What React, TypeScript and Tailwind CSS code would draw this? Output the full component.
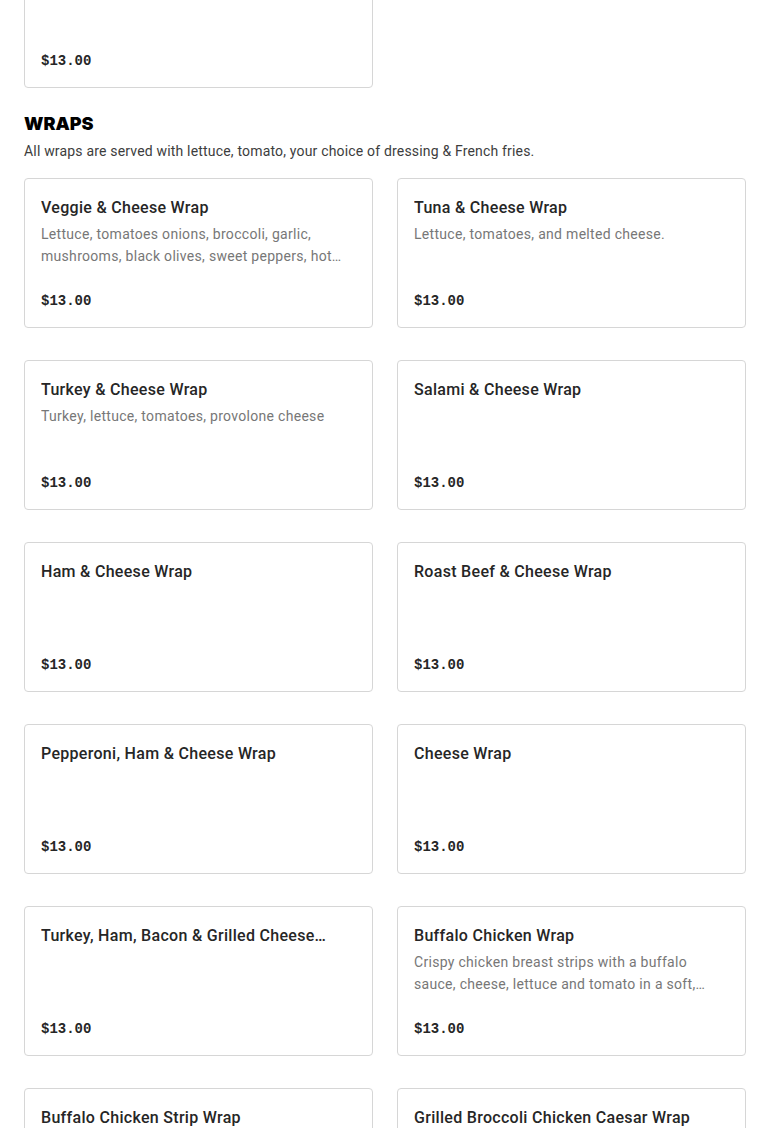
type Item = { name: string; desc?: string; price: string };

const wraps: Item[] = [
  {
    name: "Veggie & Cheese Wrap",
    desc: "Lettuce, tomatoes onions, broccoli, garlic, mushrooms, black olives, sweet peppers, hot peppers and melted cheese.",
    price: "$13.00",
  },
  { name: "Tuna & Cheese Wrap", desc: "Lettuce, tomatoes, and melted cheese.", price: "$13.00" },
  { name: "Turkey & Cheese Wrap", desc: "Turkey, lettuce, tomatoes, provolone cheese", price: "$13.00" },
  { name: "Salami & Cheese Wrap", price: "$13.00" },
  { name: "Ham & Cheese Wrap", price: "$13.00" },
  { name: "Roast Beef & Cheese Wrap", price: "$13.00" },
  { name: "Pepperoni, Ham & Cheese Wrap", price: "$13.00" },
  { name: "Cheese Wrap", price: "$13.00" },
  { name: "Turkey, Ham, Bacon & Grilled Cheese Wrap", price: "$13.00" },
  {
    name: "Buffalo Chicken Wrap",
    desc: "Crispy chicken breast strips with a buffalo sauce, cheese, lettuce and tomato in a soft, warm flour tortilla.",
    price: "$13.00",
  },
  { name: "Buffalo Chicken Strip Wrap", price: "$13.00" },
  { name: "Grilled Broccoli Chicken Caesar Wrap", price: "$13.00" },
];

function MenuCard({ item }: { item: Item }) {
  return (
    <div className="h-[150px] flex flex-col border border-[#d6d6d6] rounded-[4px] bg-white px-4 pt-[17px] pb-[15px]">
      <h3 className="text-[16px] leading-6 font-medium tracking-[0.3px] text-[#262626] line-clamp-1">{item.name}</h3>
      {item.desc && (
        <p className="mt-[3px] text-[14px] leading-[22px] tracking-[0.3px] text-[#777777] line-clamp-2">
          {item.desc}
        </p>
      )}
      <span
        className="mt-auto text-[14px] leading-[22px] font-bold text-[#262626]"
        style={{ fontFamily: "'Liberation Mono', monospace" }}
      >
        {item.price}
      </span>
    </div>
  );
}

export default function App() {
  return (
    <div className="min-h-screen bg-white px-6 overflow-hidden" style={{ fontFamily: "Roboto, 'Noto Sans', sans-serif" }}>
      {/* tail of the previous section */}
      <div className="grid grid-cols-2 gap-x-6 -mt-[62px]">
        <MenuCard item={{ name: "Meatball Parmigiana Wrap", price: "$13.00" }} />
      </div>

      <section className="mt-[22px]">
        <h2
          className="text-[18px] leading-7 font-black text-black"
          style={{ fontFamily: "Inter, sans-serif" }}
        >
          WRAPS
        </h2>
        <p className="mt-[3px] text-[14px] leading-5 tracking-[0.18px] text-[#3d3d3d]">
          All wraps are served with lettuce, tomato, your choice of dressing &amp; French fries.
        </p>
        <div className="mt-[17px] grid grid-cols-2 gap-x-6 gap-y-8">
          {wraps.map((w) => (
            <MenuCard key={w.name} item={w} />
          ))}
        </div>
      </section>
    </div>
  );
}
